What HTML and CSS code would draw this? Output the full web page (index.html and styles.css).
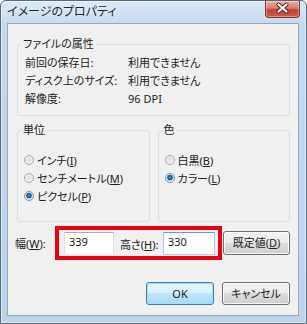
FILE: index.html
```html
<!DOCTYPE html>
<html lang="ja">
<head>
  <meta charset="UTF-8" />
  <meta name="viewport" content="width=device-width, initial-scale=1.0" />
  <title>イメージのプロパティ</title>
  <link rel="stylesheet" href="styles.css">
</head>
<body>

  <div class="window">

    <!-- title bar -->
    <div class="titlebar">
      <span class="title">イメージのプロパティ</span>
      <div class="close">
        <svg width="35" height="17" viewBox="0 0 35 17">
          <path d="M13.5 4.5 L21.5 11.5 M21.5 4.5 L13.5 11.5" stroke="#5a1a16" stroke-width="4" stroke-linecap="round" fill="none"/>
          <path d="M13.5 4.5 L21.5 11.5 M21.5 4.5 L13.5 11.5" stroke="#fff" stroke-width="2.2" stroke-linecap="round" fill="none"/>
        </svg>
      </div>
    </div>

    <div class="client">

      <!-- file attributes -->
      <fieldset class="group">
        <legend>ファイルの属性</legend>
        <div class="props">
          <span>前回の保存日:</span><span>利用できません</span>
          <span>ディスク上のサイズ:</span><span>利用できません</span>
          <span>解像度:</span><span>96 DPI</span>
        </div>
      </fieldset>

      <div class="groups">
        <fieldset class="group options">
          <legend>単位</legend>
          <div class="radio"><span class="dot"></span><span>インチ(<u>I</u>)</span></div>
          <div class="radio"><span class="dot"></span><span>センチメートル(<u>M</u>)</span></div>
          <div class="radio"><span class="dot checked"></span><span>ピクセル(<u>P</u>)</span></div>
        </fieldset>
        <fieldset class="group options">
          <legend>色</legend>
          <div class="radio"><span class="dot"></span><span>白黒(<u>B</u>)</span></div>
          <div class="radio"><span class="dot checked"></span><span>カラー(<u>L</u>)</span></div>
        </fieldset>
      </div>

      <!-- size -->
      <div class="size-row">
        <span class="size-label">幅(<u>W</u>):</span>
        <div class="highlight">
          <div class="field w">339</div>
          <span class="size-label2">高さ(<u>H</u>):</span>
          <div class="field h focused">330</div>
        </div>
        <div class="btn reset">既定値(<u>D</u>)</div>
      </div>

      <div class="buttons">
        <div class="btn default">OK</div>
        <div class="btn">キャンセル</div>
      </div>

    </div>
  </div>

</body>
</html>
```

FILE: styles.css
```css
* { box-sizing: border-box; }

html, body {
  margin: 0;
  padding: 0;
}

body {
  font-family: "Noto Sans", "Noto Sans CJK JP", sans-serif;
  font-size: 11px;
  font-feature-settings: "palt";
  color: #222;
  background: #fff;
}

u { text-underline-offset: 1px; }

.window {
  width: 307px;
  height: 324px;
  border: 1px solid #56687a;
  border-radius: 6px 6px 0 0;
  background: linear-gradient(180deg, #dce9f6 0, #c5d9ed 24px, #bdd3ea 100%);
  box-shadow: inset 0 0 0 1px rgba(255, 255, 255, 0.55);
  padding: 0 7px 7px 6px;
  display: flex;
  flex-direction: column;
}

/* title bar */
.titlebar {
  height: 22px;
  display: flex;
  justify-content: space-between;
  align-items: flex-start;
}

.title {
  font-size: 12px;
  line-height: 22px;
  color: #1c2733;
  text-shadow: 0 0 6px rgba(255, 255, 255, 0.95);
}

.close {
  width: 35px;
  height: 17px;
  margin-right: -1px;
  border: 1px solid #7a3a30;
  border-top: none;
  border-radius: 0 0 4px 4px;
  background: linear-gradient(180deg, #eab0a2 0, #d87c6c 45%, #c44034 55%, #cf5a46 100%);
  box-shadow: inset 0 0 0 1px rgba(255, 255, 255, 0.35);
}

.close svg { display: block; margin: -1px 0 0 -1px; }

/* client area */
.client {
  flex: 1;
  border: 1px solid #9aa9b9;
  background: #f0f0f0;
  padding: 12px 8px 10px 9px;
  display: flex;
  flex-direction: column;
}

.group {
  margin: 0;
  min-width: 0;
  padding: 2px 6px 7px 3px;
  border: 1px solid #d5dfe5;
  border-radius: 3px;
}

.group legend {
  padding: 0 2px;
  line-height: 16px;
}

.props {
  display: grid;
  grid-template-columns: 103px auto;
  margin-left: 4px;
  line-height: 18px;
}

.groups {
  display: flex;
  gap: 8px;
  margin-top: 6px;
}

.groups .group {
  flex: 1;
  padding-top: 13px;
  padding-bottom: 16px;
}

.radio {
  display: flex;
  align-items: center;
  gap: 3px;
  height: 18px;
  margin-left: 3px;
}

.dot {
  flex: none;
  width: 10px;
  height: 10px;
  border-radius: 50%;
  border: 1px solid #a4a8ac;
  background: radial-gradient(circle at 50% 45%, #dcdcdc 0, #ececec 3px, #fafafa 5px);
}

.dot.checked {
  border-color: #8096aa;
  background: radial-gradient(circle at 50% 45%, #4fb8ec 0, #1670b8 1.3px, #0e4f8c 2.4px, #c8dbea 3px, #f2f6f9 5px);
}

/* size row */
.size-row {
  display: flex;
  align-items: center;
  margin-top: 4px;
}

.size-label {
  width: 40px;
  margin-left: -2px;
}

.highlight {
  display: flex;
  align-items: center;
  border: 4px solid #e60012;
  padding: 2px 3px 1px 5px;
}

.field {
  height: 23px;
  background: #fff;
  border: 1px solid;
  border-color: #abadb3 #dbdfe6 #e3e9ef #e2e3ea;
  padding: 0 4px;
  line-height: 17px;
}

.field.w { width: 50px; }
.field.h { width: 52px; }
.field.focused { border-color: #5a9bd8 #a6c8ea #b5d3ef #a6c8ea; }

.size-label2 {
  width: 43px;
  margin-left: 6px;
}

/* buttons */
.btn {
  width: 68px;
  height: 23px;
  border: 1px solid #707070;
  border-radius: 3px;
  background: linear-gradient(180deg, #f2f2f2 0, #ebebeb 50%, #dddddd 50%, #cfcfcf 100%);
  box-shadow: inset 0 0 0 1px rgba(255, 255, 255, 0.8);
  text-align: center;
  line-height: 21px;
}

.btn.reset {
  width: 67px;
  height: 24px;
  margin-left: 1px;
  line-height: 22px;
}

.btn.default {
  border-color: #3c7fb1;
  background: linear-gradient(180deg, #eaf6fd 0, #d9f0fc 50%, #bee6fd 50%, #a7d9f5 100%);
  box-shadow: inset 0 0 0 1px #9fe1fa;
}

.buttons {
  display: flex;
  justify-content: flex-end;
  gap: 8px;
  margin-top: 22px;
}
```
